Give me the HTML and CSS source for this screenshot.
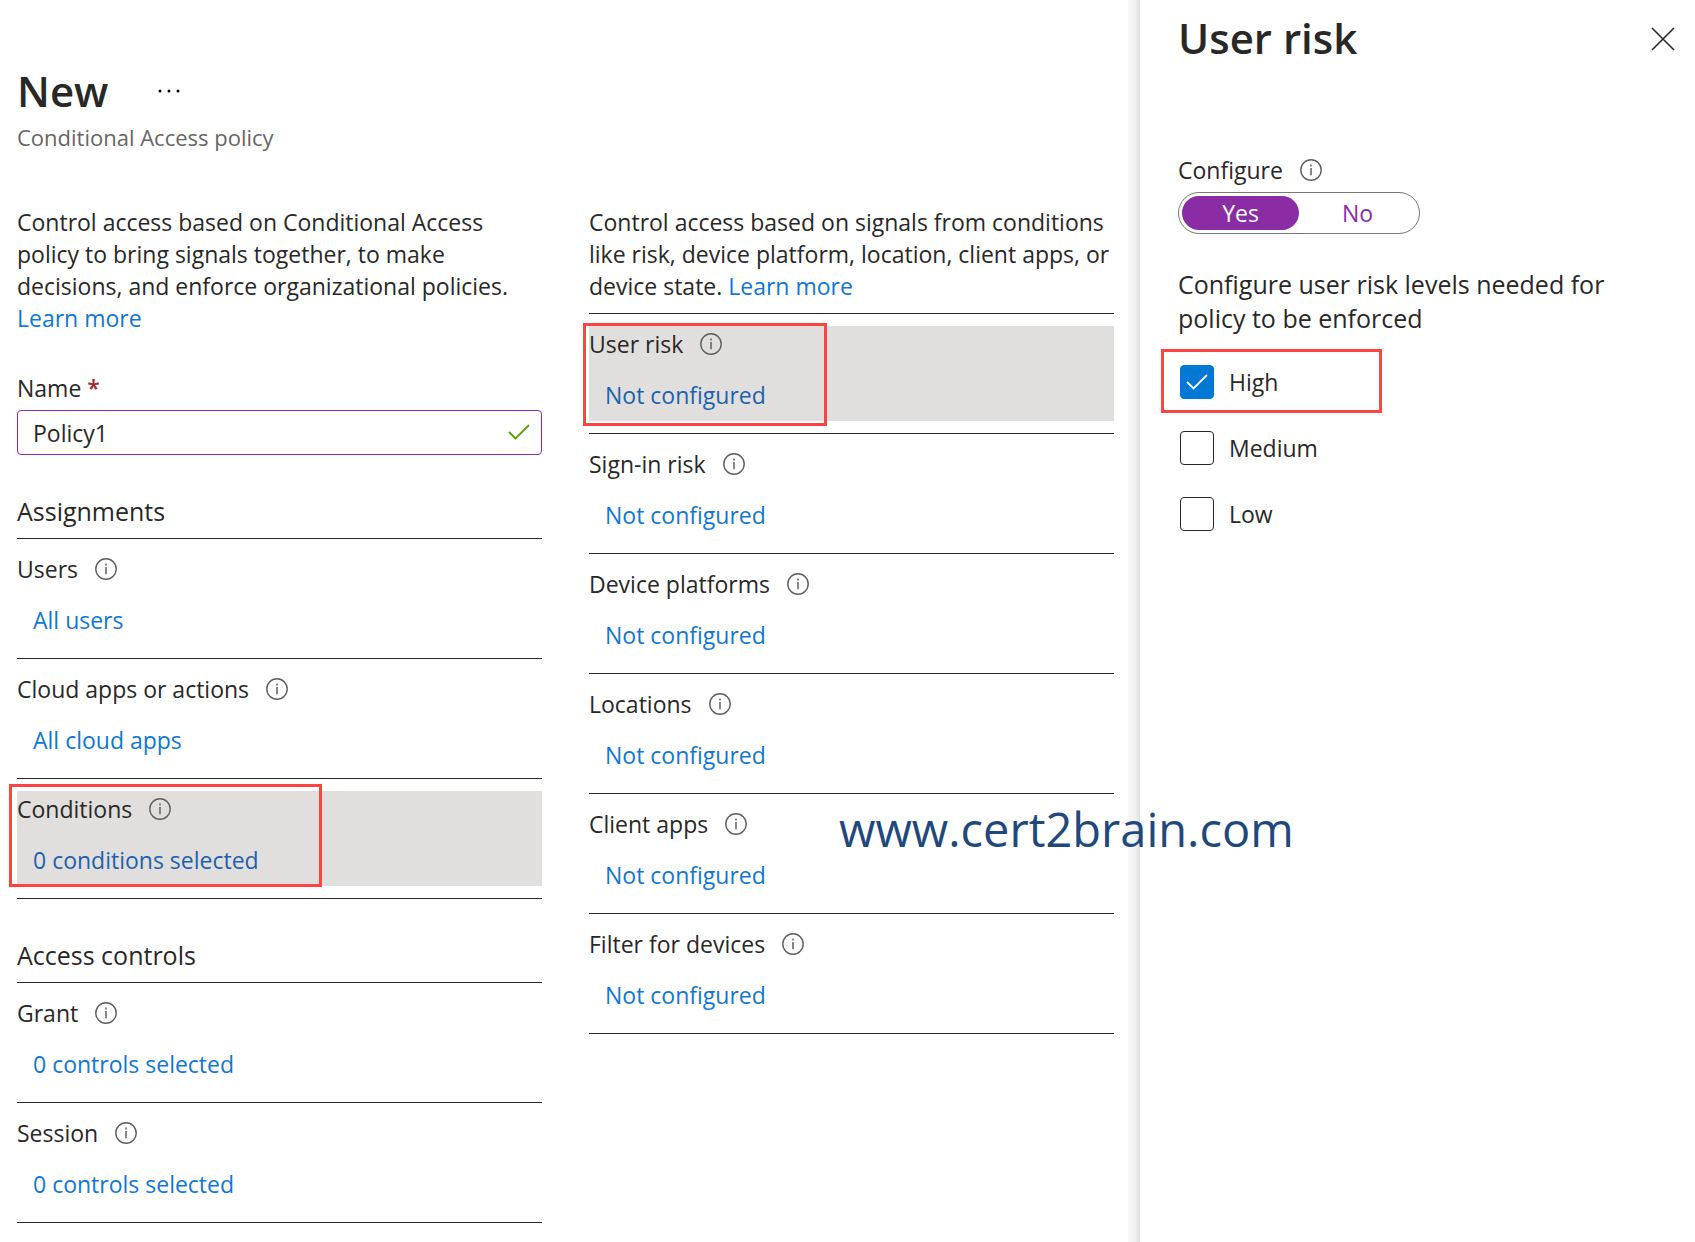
FILE: index.html
```html
<!DOCTYPE html>
<html lang="en">
<head>
    <meta charset="UTF-8">
    <meta name="viewport" content="width=device-width, initial-scale=1.0">
    <title>New - Conditional Access policy</title>
    <link rel="stylesheet" href="styles.css">
</head>
<body>
    <svg class="sprite" aria-hidden="true">
        <symbol id="info" viewBox="0 0 22 22">
            <circle cx="11" cy="11" r="10.2" fill="none" stroke="currentColor" stroke-width="1.4"/>
            <path d="M11 9v7.2M11 5.6v1.8" fill="none" stroke="currentColor" stroke-width="1.5"/>
        </symbol>
    </svg>

    <main class="blade">
        <header class="blade-header">
            <h1>New</h1>
            <button class="more" type="button" aria-label="More">
                <svg width="22" height="4" viewBox="0 0 22 4"><circle cx="2" cy="2" r="1.5"/><circle cx="11" cy="2" r="1.5"/><circle cx="20" cy="2" r="1.5"/></svg>
            </button>
        </header>
        <p class="subtitle">Conditional Access policy</p>

        <div class="columns">
            <section>
                <p class="intro">Control access based on Conditional Access policy to bring signals together, to make decisions, and enforce organizational policies. <a href="#">Learn more</a></p>

                <label class="name-label" for="name">Name <span class="required">*</span></label>
                <div class="name-field">
                    <input type="text" id="name" value="Policy1">
                    <svg class="valid" width="22" height="16" viewBox="0 0 22 16"><path d="M1 8l6.5 6.5L21 1" fill="none" stroke="currentColor" stroke-width="1.8"/></svg>
                </div>

                <h2>Assignments</h2>
                <div class="row">
                    <div class="cell">
                        <div class="label">Users <svg class="info"><use href="#info"/></svg></div>
                        <a href="#">All users</a>
                    </div>
                </div>
                <div class="row">
                    <div class="cell">
                        <div class="label">Cloud apps or actions <svg class="info"><use href="#info"/></svg></div>
                        <a href="#">All cloud apps</a>
                    </div>
                </div>
                <div class="row">
                    <div class="cell selected">
                        <div class="label">Conditions <svg class="info"><use href="#info"/></svg></div>
                        <a href="#">0 conditions selected</a>
                        <span class="mark mark-conditions"></span>
                    </div>
                </div>

                <h2>Access controls</h2>
                <div class="row">
                    <div class="cell">
                        <div class="label">Grant <svg class="info"><use href="#info"/></svg></div>
                        <a href="#">0 controls selected</a>
                    </div>
                </div>
                <div class="row">
                    <div class="cell">
                        <div class="label">Session <svg class="info"><use href="#info"/></svg></div>
                        <a href="#">0 controls selected</a>
                    </div>
                </div>
            </section>

            <section>
                <p class="intro conditions-intro">Control access based on signals from conditions like risk, device platform, location, client apps, or device state. <a href="#">Learn more</a></p>

                <div class="row">
                    <div class="cell selected">
                        <div class="label">User risk <svg class="info"><use href="#info"/></svg></div>
                        <a href="#">Not configured</a>
                        <span class="mark mark-user-risk"></span>
                    </div>
                </div>
                <div class="row">
                    <div class="cell">
                        <div class="label">Sign-in risk <svg class="info"><use href="#info"/></svg></div>
                        <a href="#">Not configured</a>
                    </div>
                </div>
                <div class="row">
                    <div class="cell">
                        <div class="label">Device platforms <svg class="info"><use href="#info"/></svg></div>
                        <a href="#">Not configured</a>
                    </div>
                </div>
                <div class="row">
                    <div class="cell">
                        <div class="label">Locations <svg class="info"><use href="#info"/></svg></div>
                        <a href="#">Not configured</a>
                    </div>
                </div>
                <div class="row">
                    <div class="cell">
                        <div class="label">Client apps <svg class="info"><use href="#info"/></svg></div>
                        <a href="#">Not configured</a>
                    </div>
                </div>
                <div class="row">
                    <div class="cell">
                        <div class="label">Filter for devices <svg class="info"><use href="#info"/></svg></div>
                        <a href="#">Not configured</a>
                    </div>
                </div>
            </section>
        </div>
    </main>

    <aside class="panel">
        <header class="panel-header">
            <h1>User risk</h1>
            <button class="close" type="button" aria-label="Close">
                <svg width="24" height="24" viewBox="0 0 24 24"><path d="M1 1l22 22M23 1L1 23" fill="none" stroke="currentColor" stroke-width="1.6"/></svg>
            </button>
        </header>

        <div class="label">Configure <svg class="info"><use href="#info"/></svg></div>
        <div class="toggle" role="radiogroup" aria-label="Configure">
            <label><input type="radio" name="configure" checked><span>Yes</span></label>
            <label><input type="radio" name="configure"><span>No</span></label>
        </div>

        <p class="levels-text">Configure user risk levels needed for policy to be enforced</p>
        <div class="levels">
            <label class="level">
                <input type="checkbox" checked>
                <svg class="tick" width="22" height="16" viewBox="0 0 22 16"><path d="M1 8l6.5 6.5L21 1" fill="none" stroke="currentColor" stroke-width="1.8"/></svg>
                High
                <span class="mark mark-high"></span>
            </label>
            <label class="level"><input type="checkbox"> Medium</label>
            <label class="level"><input type="checkbox"> Low</label>
        </div>
    </aside>

    <div class="watermark">www.cert2brain.com</div>
</body>
</html>
```
FILE: styles.css
```css
* {
    box-sizing: border-box;
}

body {
    position: relative;
    display: grid;
    grid-template-columns: minmax(0, 1fr) 555px;
    min-height: 100vh;
    margin: 0;
    background-color: #fff;
    color: #292827;
    font-family: "Open Sans", "Noto Sans", sans-serif;
    font-size: 23px;
    line-height: 32px;
}

h1, h2, p {
    margin: 0;
}

h1 {
    font-size: 42px;
    font-weight: 600;
    line-height: 60px;
}

h2 {
    margin-top: 40px;
    padding-bottom: 11px;
    border-bottom: 1px solid #292827;
    font-size: 25px;
    font-weight: 400;
    line-height: 32px;
}

a {
    color: #0f78d4;
    text-decoration: none;
}

button {
    display: flex;
    padding: 0;
    border: none;
    background: none;
    color: #292827;
    cursor: pointer;
}

.sprite {
    position: absolute;
    width: 0;
    height: 0;
}

/* Policy blade */
.blade {
    padding: 61px 26px 19px 17px;
}

.blade-header {
    display: flex;
    align-items: center;
    gap: 50px;
}

.subtitle {
    margin-bottom: 53px;
    color: #666;
    font-size: 22px;
}

.columns {
    display: grid;
    grid-template-columns: repeat(2, minmax(0, 1fr));
    gap: 47px;
}

.conditions-intro {
    padding-bottom: 11px;
    border-bottom: 1px solid #292827;
}

.name-label {
    display: block;
    margin: 38px 0 6px;
}

.required {
    color: #a4262c;
    font-weight: 600;
}

.name-field {
    position: relative;
}

.name-field input {
    display: block;
    width: 100%;
    height: 45px;
    padding: 0 48px 0 15px;
    border: 1px solid #8a2da5;
    border-radius: 4px;
    color: inherit;
    font: inherit;
}

.valid {
    position: absolute;
    top: 14px;
    right: 12px;
    color: #57a300;
}

.row {
    padding: 12px 0;
    border-bottom: 1px solid #292827;
}

.cell {
    position: relative;
    padding: 2px 0 10px;
}

.cell a {
    display: block;
    margin: 19px 0 0 16px;
}

.selected {
    background-color: #e1dfdd;
}

.selected a {
    color: #1b62b0;
}

.label {
    display: flex;
    align-items: center;
    gap: 17px;
}

.info {
    width: 22px;
    height: 22px;
    color: #605e5c;
}

/* User risk panel */
.panel {
    position: relative;
    padding: 8px 20px 0 38px;
}

.panel::before {
    content: "";
    position: absolute;
    top: 0;
    bottom: 0;
    left: -12px;
    width: 12px;
    background: linear-gradient(to right, #f8f8f8, #f1f1f1 60%, #dedede);
}

.panel-header {
    display: flex;
    align-items: center;
    justify-content: space-between;
    margin-bottom: 86px;
}

.close {
    margin-top: 2px;
}

.toggle {
    display: flex;
    width: 242px;
    height: 42px;
    margin: 6px 0 33px;
    padding: 3px;
    border: 1px solid #797775;
    border-radius: 21px;
}

.toggle label {
    flex: 1;
    color: #8a2da5;
    line-height: 34px;
    text-align: center;
    cursor: pointer;
}

.toggle input {
    position: absolute;
    opacity: 0;
}

.toggle span {
    display: block;
    border-radius: 17px;
}

.toggle input:checked + span {
    background-color: #8a2da5;
    color: #fff;
}

.levels-text {
    max-width: 460px;
    font-size: 25px;
    line-height: 34px;
}

.levels {
    display: flex;
    flex-direction: column;
    gap: 32px;
    margin: 30px 0 0 2px;
}

.level {
    position: relative;
    display: flex;
    align-items: center;
    gap: 15px;
    height: 34px;
}

.level input {
    width: 34px;
    height: 34px;
    margin: 0;
    border: 1px solid #292827;
    border-radius: 4px;
    appearance: none;
}

.level input:checked {
    border-color: #0078d4;
    background-color: #0078d4;
}

.tick {
    position: absolute;
    left: 6px;
    color: #fff;
}

/* Red frames around the steps to follow */
.mark {
    position: absolute;
    border: 3px solid #ff4343;
    pointer-events: none;
}

.mark-conditions {
    top: -7px;
    left: -8px;
    width: 313px;
    height: 103px;
}

.mark-user-risk {
    top: -3px;
    left: -6px;
    width: 244px;
    height: 103px;
}

.mark-high {
    top: -16px;
    left: -19px;
    width: 221px;
    height: 64px;
}

.watermark {
    position: absolute;
    top: 799px;
    left: 839px;
    color: #1f497d;
    font-size: 47px;
    line-height: 60px;
}
```
